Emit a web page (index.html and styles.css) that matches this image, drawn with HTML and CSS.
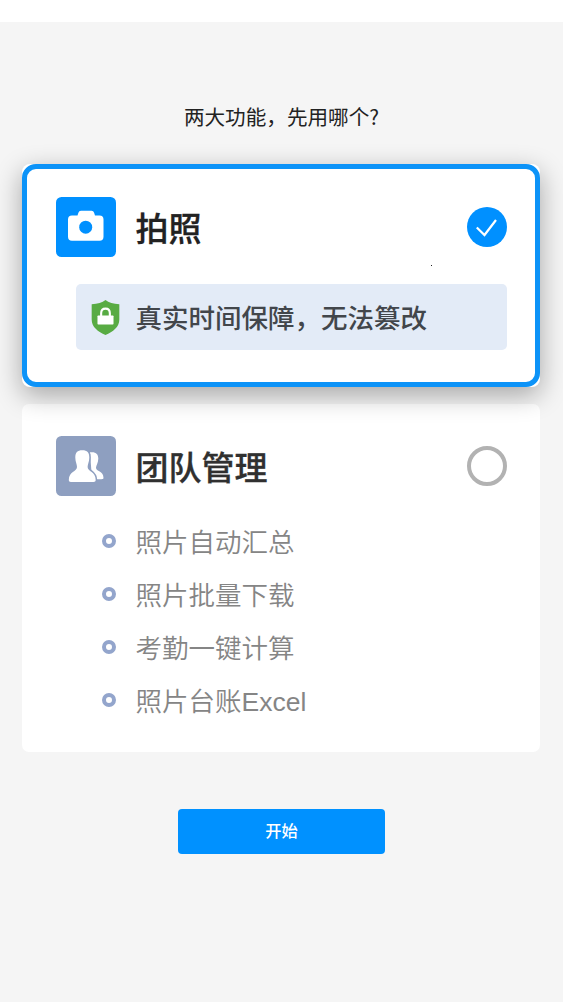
FILE: index.html
```html
<!DOCTYPE html>
<html lang="zh-CN">
<head>
<meta charset="utf-8">
<title>选择功能</title>
<link rel="stylesheet" href="styles.css">
</head>
<body>
<main class="page">
  <h1 class="question">两大功能，先用哪个?</h1>
  <section class="selected-wrap">
    <div class="card card-selected">
      <header class="card-head">
        <svg class="tile" viewBox="0 0 60 60"><rect width="60" height="60" rx="5.5" fill="#0090ff"/><path d="M16 18.500h5.500l.9-2.700q.6-2 2.500-2h10.700q1.900 0 2.500 2l.9 2.700h4.500q4 0 4 4v17.300q0 4-4 4H16q-4 0-4-4V22.500q0-4 4-4z" fill="#fff"/><circle cx="29.700" cy="30.200" r="6.500" fill="#0090ff"/></svg>
        <h2 class="name">拍照</h2>
        <svg class="mark" viewBox="0 0 40 40"><circle cx="20" cy="20" r="20" fill="#0090ff"/><path d="M9.800 20.500 17.500 28 29 13" fill="none" stroke="#fff" stroke-width="2.200"/></svg>
      </header>
      <span class="dot"></span>
      <div class="promise">
        <svg class="shield" viewBox="0 0 30 37"><path d="M15 .5q5 4.200 14.300 4.300v15.700c0 8-6.500 12.500-14.300 16-7.800-3.500-14.300-8-14.300-16v-15.700q9.300-.1 14.300-4.300z" fill="#58ab43"/><path d="M10.500 18v-4q0-4.700 4.500-4.700t4.500 4.700v4" fill="none" stroke="#fff" stroke-width="2.200"/><rect x="6.700" y="16.500" width="16.600" height="9.200" rx=".8" fill="#fff"/></svg>
        <span>真实时间保障，无法篡改</span>
      </div>
    </div>
  </section>
  <section class="card card-team">
    <header class="card-head">
      <svg class="tile" viewBox="0 0 60 60"><rect width="60" height="60" rx="5.500" fill="#8e9fc0"/><path d="M34 16.300c5.700-.8 8.300 1.500 8.300 6.200 0 4.500-2.300 7-2.300 9.300 0 4 7.500 2.500 7.500 10.200 0 .8-.7 1.200-2 1.200H36z" fill="#fff"/><path d="M26.300 14.300c5 0 7 2.500 7 7.200 0 4.500-1.700 6.500-1.700 9.500 0 4.700 8.100 4.300 8.100 13 0 1.200-.7 1.900-2.200 1.900H15c-1.500 0-2.200-.7-2.200-1.900 0-8.700 8.200-8.300 8.200-13 0-3-1.700-5-1.700-9.500 0-4.700 2-7.200 7-7.200z" fill="#fff" stroke="#8e9fc0" stroke-width="3" paint-order="stroke"/></svg>
      <h2 class="name">团队管理</h2>
      <span class="mark mark-empty"></span>
    </header>
    <ul class="features">
      <li>照片自动汇总</li>
      <li>照片批量下载</li>
      <li>考勤一键计算</li>
      <li>照片台账Excel</li>
    </ul>
  </section>
  <button class="start">开始</button>
</main>
</body>
</html>
```
FILE: styles.css
```css
*, *::before { box-sizing: border-box; }
body {
  margin: 0;
  background: #fff;
  font-family: "Liberation Sans", "Noto Sans CJK SC", sans-serif;
}
.page {
  display: flex;
  flex-direction: column;
  align-items: center;
  margin-top: 22px;
  height: 980px;
  background: #f5f5f5;
  overflow: hidden;
}
.question {
  margin: 79px 0 33px;
  font: 400 20.6px/30px "Noto Sans CJK SC", sans-serif;
  color: #222;
}
.selected-wrap {
  position: relative;
  z-index: 1;
  flex: none;
  width: 518px;
  height: 223px;
  margin-right: 1px;
  border-radius: 8px;
  background: #fff;
  box-shadow: 0 8px 27px rgba(0, 0, 0, .33);
}
.card {
  width: 518px;
  background: #fff;
}
.card-selected {
  position: relative;
  height: 223px;
  padding: 28px 28px 0 28.5px;
  border: 5px solid #0c93f8;
  border-radius: 14px;
}
.card-head {
  display: flex;
  align-items: center;
  height: 60px;
}
.tile { width: 60px; height: 60px; flex: none; }
.name {
  flex: 1;
  margin: -1px 0 0 20px;
  font: 500 33px/48px "Noto Sans CJK SC", sans-serif;
  color: #222;
  -webkit-text-stroke: .3px currentColor;
}
.mark { width: 40px; height: 40px; flex: none; }
.mark-empty {
  border: 4px solid #b2b2b2;
  border-radius: 50%;
}
.dot {
  position: absolute;
  left: 404px;
  top: 96px;
  width: 1px;
  height: 1px;
  background: #222;
}
.promise {
  display: flex;
  align-items: center;
  gap: 16px;
  height: 66px;
  margin: 27px 0 0 20px;
  padding-left: 15px;
  border-radius: 5px;
  background: #e3ebf7;
  color: #42464b;
  font: 500 26.5px/40px "Noto Sans CJK SC", sans-serif;
}
.shield { width: 29px; height: 37px; flex: none; }
.card-team {
  flex: none;
  height: 348px;
  margin-top: 17px;
  margin-right: 1px;
  padding: 32px 33px 0 33.5px;
  border-radius: 7px;
}
.card-team .name { color: #303030; }
.features {
  list-style: none;
  margin: 20px 0 0 46px;
  padding: 0;
}
.features li {
  display: flex;
  align-items: center;
  gap: 20px;
  height: 53px;
  font-size: 26.5px;
  font-weight: 350;
  line-height: 40px;
  color: #858585;
}
.features li::before {
  content: "";
  width: 14px;
  height: 14px;
  margin-bottom: 3px;
  border: 4.5px solid #93a5cc;
  border-radius: 50%;
}
.start {
  flex: none;
  width: 207px;
  height: 45px;
  margin-top: 57px;
  padding: 0 0 2px;
  border: 0;
  border-radius: 4px;
  background: #0091ff;
  color: #fff;
  font: 500 16.3px/43px "Noto Sans CJK SC", sans-serif;
}
```
